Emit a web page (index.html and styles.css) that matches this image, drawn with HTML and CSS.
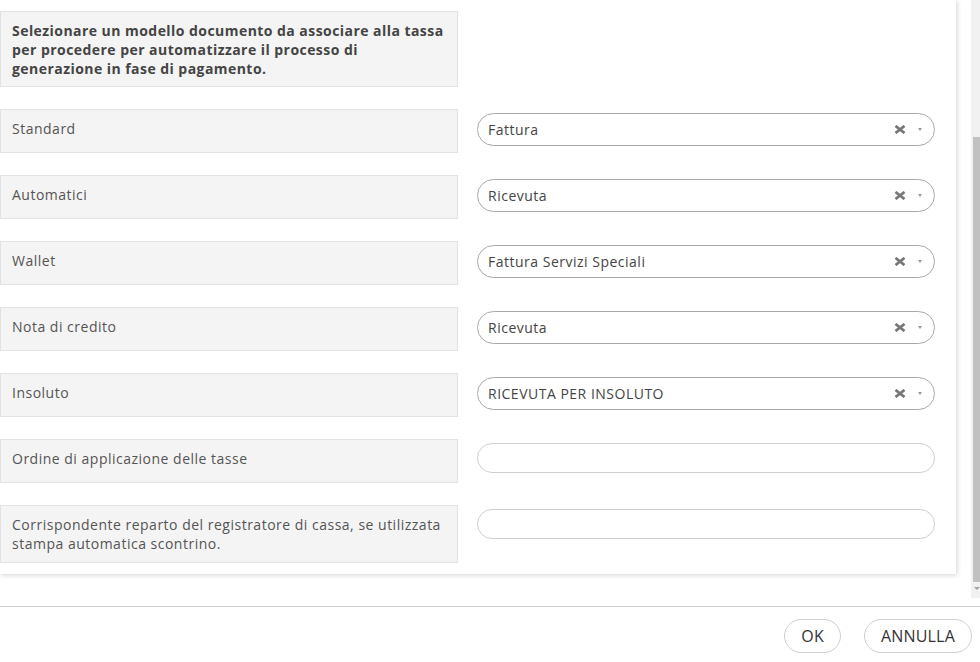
FILE: index.html
```html
<!DOCTYPE html>
<html lang="it">
<head>
<meta charset="utf-8">
<title>Modelli documento</title>
<link rel="stylesheet" href="styles.css">
</head>
<body>
<div class="viewport">
  <div class="scroll">
    <div class="card">
      <div class="row">
        <div class="label heading">Selezionare un modello documento da associare alla tassa per procedere per automatizzare il processo di generazione in fase di pagamento.</div>
        <div class="field"></div>
      </div>
      <div class="row">
        <div class="label">Standard</div>
        <div class="field"><div class="select"><span class="value">Fattura</span><svg class="clear" width="12" height="9" viewBox="0 0 12 9"><path d="M1.5 1 L10.5 8 M10.5 1 L1.5 8" stroke="#777" stroke-width="2.8" stroke-linecap="butt"/></svg><span class="arrow"></span></div></div>
      </div>
      <div class="row">
        <div class="label">Automatici</div>
        <div class="field"><div class="select"><span class="value">Ricevuta</span><svg class="clear" width="12" height="9" viewBox="0 0 12 9"><path d="M1.5 1 L10.5 8 M10.5 1 L1.5 8" stroke="#777" stroke-width="2.8" stroke-linecap="butt"/></svg><span class="arrow"></span></div></div>
      </div>
      <div class="row">
        <div class="label">Wallet</div>
        <div class="field"><div class="select"><span class="value">Fattura Servizi Speciali</span><svg class="clear" width="12" height="9" viewBox="0 0 12 9"><path d="M1.5 1 L10.5 8 M10.5 1 L1.5 8" stroke="#777" stroke-width="2.8" stroke-linecap="butt"/></svg><span class="arrow"></span></div></div>
      </div>
      <div class="row">
        <div class="label">Nota di credito</div>
        <div class="field"><div class="select"><span class="value">Ricevuta</span><svg class="clear" width="12" height="9" viewBox="0 0 12 9"><path d="M1.5 1 L10.5 8 M10.5 1 L1.5 8" stroke="#777" stroke-width="2.8" stroke-linecap="butt"/></svg><span class="arrow"></span></div></div>
      </div>
      <div class="row">
        <div class="label">Insoluto</div>
        <div class="field"><div class="select"><span class="value">RICEVUTA PER INSOLUTO</span><svg class="clear" width="12" height="9" viewBox="0 0 12 9"><path d="M1.5 1 L10.5 8 M10.5 1 L1.5 8" stroke="#777" stroke-width="2.8" stroke-linecap="butt"/></svg><span class="arrow"></span></div></div>
      </div>
      <div class="row">
        <div class="label">Ordine di applicazione delle tasse</div>
        <div class="field"><input class="input" type="text"></div>
      </div>
      <div class="row">
        <div class="label">Corrispondente reparto del registratore di cassa, se utilizzata stampa automatica scontrino.</div>
        <div class="field"><input class="input" type="text"></div>
      </div>
    </div>
  </div>
  <div class="scrollbar">
    <div class="thumb"></div>
    <div class="sb-arrow"></div>
  </div>
</div>
<div class="footer">
  <button class="btn">OK</button>
  <button class="btn">ANNULLA</button>
</div>
</body>
</html>
```
FILE: styles.css
```css
* { box-sizing: border-box; }
html, body { margin: 0; padding: 0; background: #fff; }
body {
  font-family: "Open Sans", "Lato", sans-serif;
  font-size: 14px;
  letter-spacing: 0.5px;
  color: #555;
  width: 980px;
  height: 662px;
  overflow: hidden;
}
.viewport {
  display: flex;
  height: 598px;
}
.scroll {
  flex: 1;
  overflow: hidden;
  padding-right: 15px;
}
.card {
  background: #fff;
  box-shadow: 1px 1px 5px rgba(0,0,0,0.18);
  padding: 11px 21px 11px 0;
  display: flex;
  flex-direction: column;
  gap: 22px;
}
.row {
  display: flex;
  gap: 19px;
}
.label {
  width: 458px;
  flex: none;
  min-height: 44px;
  background: #f4f4f4;
  border: 1px solid #e2e2e2;
  padding: 9px 11px 9px;
  line-height: 19px;
  color: #555;
}
.heading {
  font-weight: 700;
  color: #444;
  letter-spacing: 0.45px;
  padding-bottom: 8px;
}
.field {
  flex: 1;
  padding-top: 4px;
}
.select {
  height: 33px;
  border: 1px solid #a9a9a9;
  border-radius: 17px;
  display: flex;
  align-items: center;
  padding: 0 12px 0 10px;
}
.value {
  flex: 1;
  color: #444;
}
.clear {
  display: block;
  margin-right: 12px;
  margin-top: -1px;
}
.arrow {
  width: 0; height: 0;
  border-left: 2.5px solid transparent;
  border-right: 2.5px solid transparent;
  border-top: 3px solid #999;
  margin-top: -1px;
}
.input {
  display: block;
  width: 100%;
  height: 30px;
  border: 1px solid #cfcfcf;
  border-radius: 15px;
  background: #fff;
  font: inherit;
  padding: 0 10px;
}
.scrollbar {
  width: 9px;
  flex: none;
  background: #f1f1f1;
  display: flex;
  flex-direction: column;
  padding-top: 137px;
  padding-left: 2px;
}
.thumb {
  height: 445px;
  background: #c1c1c1;
}
.sb-arrow {
  margin: 5px 0 0 1px;
  width: 0; height: 0;
  border-left: 3px solid transparent;
  border-right: 3px solid transparent;
  border-top: 3px solid #a3a3a3;
}
.footer {
  margin-top: 8px;
  border-top: 1px solid #cfcfcf;
  display: flex;
  justify-content: flex-end;
  gap: 23px;
  padding: 12px 8px 0 0;
}
.btn {
  height: 34px;
  border: 1px solid #cfcfcf;
  border-radius: 17px;
  background: #fff;
  font-family: inherit;
  font-size: 16px;
  letter-spacing: 0.2px;
  color: #333;
  padding: 0 16px;
}
```
